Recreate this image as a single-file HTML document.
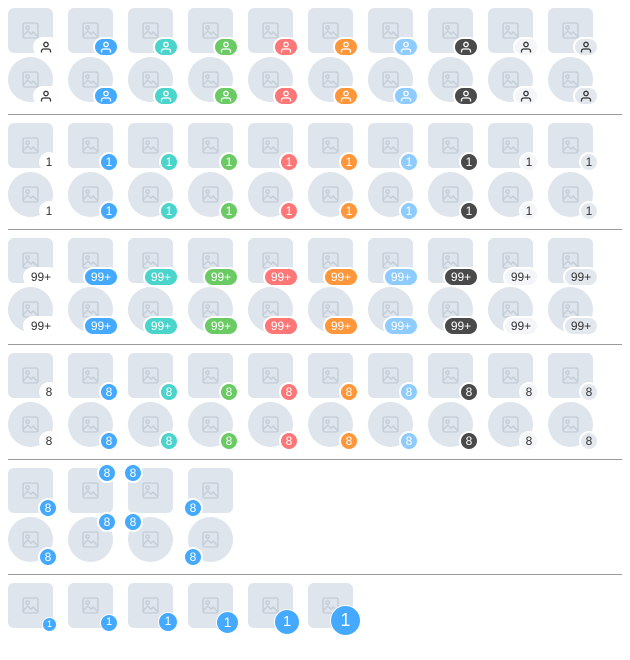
<!DOCTYPE html>
<html><head><meta charset="utf-8"><style>
*{margin:0;padding:0;box-sizing:border-box}
body{width:630px;height:660px;background:#fff;position:relative;overflow:hidden;font-family:"Liberation Sans",sans-serif}
.a{position:absolute;width:45px;height:45px;background:#dfe5ec;border-radius:6px}
.c{border-radius:50%}
.i{position:absolute;left:14px;top:14px;width:17px;height:17px;fill:none;stroke:#c5ced8;stroke-width:1.4}
.b{position:absolute;right:-6px;bottom:-4px;height:20px;min-width:20px;border:2px solid #fff;border-radius:10px;font-size:12px;line-height:16px;text-align:center;color:#fff;font-weight:500;padding:0 3px;white-space:nowrap}
.p{width:26px;padding:0}
.p svg{width:12px;height:12px;margin-top:2px;fill:none;stroke:currentColor;stroke-width:1.3}
.q{width:36px}
.k0{background:#fff;color:#333;box-shadow:0 0 1px rgba(0,0,0,.05)}.k1{background:#45aaff}.k2{background:#4ad4cc}.k3{background:#6acb64}.k4{background:#ff7676}.k5{background:#ff963a}.k6{background:#8ecbff}.k7{background:#4a4a4a}.k8{background:#f3f5f8;color:#333}.k9{background:#e3e8ee;color:#333}
.h{position:absolute;left:8px;width:614px;height:1px;background:#9a9a9a}
.d{position:absolute;border-radius:50%;background:#45aaff;color:#fff;text-align:center;border:1.5px solid #fff}
</style></head><body>
<div class="h" style="top:114px"></div><div class="h" style="top:229px"></div><div class="h" style="top:344px"></div><div class="h" style="top:459px"></div><div class="h" style="top:574px"></div>

<!-- section 1 -->
<div class="a" style="left:8px;top:8px"><svg class="i" viewBox="0 0 16 16"><rect x="1" y="1" width="14" height="14" rx="1.5"/><circle cx="5.3" cy="5.3" r="1.6"/><path d="M1 13l4.5-4.5 3 3 2-2 4.5 4.5"/></svg><div class="b p k0"><svg viewBox="0 0 12 12"><circle cx="6" cy="3.5" r="2.2"/><path d="M1.5 11.5v-1.5a2 2 0 0 1 2-2h5a2 2 0 0 1 2 2v1.5"/></svg></div></div>
<div class="a" style="left:68px;top:8px"><svg class="i" viewBox="0 0 16 16"><rect x="1" y="1" width="14" height="14" rx="1.5"/><circle cx="5.3" cy="5.3" r="1.6"/><path d="M1 13l4.5-4.5 3 3 2-2 4.5 4.5"/></svg><div class="b p k1"><svg viewBox="0 0 12 12"><circle cx="6" cy="3.5" r="2.2"/><path d="M1.5 11.5v-1.5a2 2 0 0 1 2-2h5a2 2 0 0 1 2 2v1.5"/></svg></div></div>
<div class="a" style="left:128px;top:8px"><svg class="i" viewBox="0 0 16 16"><rect x="1" y="1" width="14" height="14" rx="1.5"/><circle cx="5.3" cy="5.3" r="1.6"/><path d="M1 13l4.5-4.5 3 3 2-2 4.5 4.5"/></svg><div class="b p k2"><svg viewBox="0 0 12 12"><circle cx="6" cy="3.5" r="2.2"/><path d="M1.5 11.5v-1.5a2 2 0 0 1 2-2h5a2 2 0 0 1 2 2v1.5"/></svg></div></div>
<div class="a" style="left:188px;top:8px"><svg class="i" viewBox="0 0 16 16"><rect x="1" y="1" width="14" height="14" rx="1.5"/><circle cx="5.3" cy="5.3" r="1.6"/><path d="M1 13l4.5-4.5 3 3 2-2 4.5 4.5"/></svg><div class="b p k3"><svg viewBox="0 0 12 12"><circle cx="6" cy="3.5" r="2.2"/><path d="M1.5 11.5v-1.5a2 2 0 0 1 2-2h5a2 2 0 0 1 2 2v1.5"/></svg></div></div>
<div class="a" style="left:248px;top:8px"><svg class="i" viewBox="0 0 16 16"><rect x="1" y="1" width="14" height="14" rx="1.5"/><circle cx="5.3" cy="5.3" r="1.6"/><path d="M1 13l4.5-4.5 3 3 2-2 4.5 4.5"/></svg><div class="b p k4"><svg viewBox="0 0 12 12"><circle cx="6" cy="3.5" r="2.2"/><path d="M1.5 11.5v-1.5a2 2 0 0 1 2-2h5a2 2 0 0 1 2 2v1.5"/></svg></div></div>
<div class="a" style="left:308px;top:8px"><svg class="i" viewBox="0 0 16 16"><rect x="1" y="1" width="14" height="14" rx="1.5"/><circle cx="5.3" cy="5.3" r="1.6"/><path d="M1 13l4.5-4.5 3 3 2-2 4.5 4.5"/></svg><div class="b p k5"><svg viewBox="0 0 12 12"><circle cx="6" cy="3.5" r="2.2"/><path d="M1.5 11.5v-1.5a2 2 0 0 1 2-2h5a2 2 0 0 1 2 2v1.5"/></svg></div></div>
<div class="a" style="left:368px;top:8px"><svg class="i" viewBox="0 0 16 16"><rect x="1" y="1" width="14" height="14" rx="1.5"/><circle cx="5.3" cy="5.3" r="1.6"/><path d="M1 13l4.5-4.5 3 3 2-2 4.5 4.5"/></svg><div class="b p k6"><svg viewBox="0 0 12 12"><circle cx="6" cy="3.5" r="2.2"/><path d="M1.5 11.5v-1.5a2 2 0 0 1 2-2h5a2 2 0 0 1 2 2v1.5"/></svg></div></div>
<div class="a" style="left:428px;top:8px"><svg class="i" viewBox="0 0 16 16"><rect x="1" y="1" width="14" height="14" rx="1.5"/><circle cx="5.3" cy="5.3" r="1.6"/><path d="M1 13l4.5-4.5 3 3 2-2 4.5 4.5"/></svg><div class="b p k7"><svg viewBox="0 0 12 12"><circle cx="6" cy="3.5" r="2.2"/><path d="M1.5 11.5v-1.5a2 2 0 0 1 2-2h5a2 2 0 0 1 2 2v1.5"/></svg></div></div>
<div class="a" style="left:488px;top:8px"><svg class="i" viewBox="0 0 16 16"><rect x="1" y="1" width="14" height="14" rx="1.5"/><circle cx="5.3" cy="5.3" r="1.6"/><path d="M1 13l4.5-4.5 3 3 2-2 4.5 4.5"/></svg><div class="b p k8"><svg viewBox="0 0 12 12"><circle cx="6" cy="3.5" r="2.2"/><path d="M1.5 11.5v-1.5a2 2 0 0 1 2-2h5a2 2 0 0 1 2 2v1.5"/></svg></div></div>
<div class="a" style="left:548px;top:8px"><svg class="i" viewBox="0 0 16 16"><rect x="1" y="1" width="14" height="14" rx="1.5"/><circle cx="5.3" cy="5.3" r="1.6"/><path d="M1 13l4.5-4.5 3 3 2-2 4.5 4.5"/></svg><div class="b p k9"><svg viewBox="0 0 12 12"><circle cx="6" cy="3.5" r="2.2"/><path d="M1.5 11.5v-1.5a2 2 0 0 1 2-2h5a2 2 0 0 1 2 2v1.5"/></svg></div></div>
<div class="a c" style="left:8px;top:57px"><svg class="i" viewBox="0 0 16 16"><rect x="1" y="1" width="14" height="14" rx="1.5"/><circle cx="5.3" cy="5.3" r="1.6"/><path d="M1 13l4.5-4.5 3 3 2-2 4.5 4.5"/></svg><div class="b p k0"><svg viewBox="0 0 12 12"><circle cx="6" cy="3.5" r="2.2"/><path d="M1.5 11.5v-1.5a2 2 0 0 1 2-2h5a2 2 0 0 1 2 2v1.5"/></svg></div></div>
<div class="a c" style="left:68px;top:57px"><svg class="i" viewBox="0 0 16 16"><rect x="1" y="1" width="14" height="14" rx="1.5"/><circle cx="5.3" cy="5.3" r="1.6"/><path d="M1 13l4.5-4.5 3 3 2-2 4.5 4.5"/></svg><div class="b p k1"><svg viewBox="0 0 12 12"><circle cx="6" cy="3.5" r="2.2"/><path d="M1.5 11.5v-1.5a2 2 0 0 1 2-2h5a2 2 0 0 1 2 2v1.5"/></svg></div></div>
<div class="a c" style="left:128px;top:57px"><svg class="i" viewBox="0 0 16 16"><rect x="1" y="1" width="14" height="14" rx="1.5"/><circle cx="5.3" cy="5.3" r="1.6"/><path d="M1 13l4.5-4.5 3 3 2-2 4.5 4.5"/></svg><div class="b p k2"><svg viewBox="0 0 12 12"><circle cx="6" cy="3.5" r="2.2"/><path d="M1.5 11.5v-1.5a2 2 0 0 1 2-2h5a2 2 0 0 1 2 2v1.5"/></svg></div></div>
<div class="a c" style="left:188px;top:57px"><svg class="i" viewBox="0 0 16 16"><rect x="1" y="1" width="14" height="14" rx="1.5"/><circle cx="5.3" cy="5.3" r="1.6"/><path d="M1 13l4.5-4.5 3 3 2-2 4.5 4.5"/></svg><div class="b p k3"><svg viewBox="0 0 12 12"><circle cx="6" cy="3.5" r="2.2"/><path d="M1.5 11.5v-1.5a2 2 0 0 1 2-2h5a2 2 0 0 1 2 2v1.5"/></svg></div></div>
<div class="a c" style="left:248px;top:57px"><svg class="i" viewBox="0 0 16 16"><rect x="1" y="1" width="14" height="14" rx="1.5"/><circle cx="5.3" cy="5.3" r="1.6"/><path d="M1 13l4.5-4.5 3 3 2-2 4.5 4.5"/></svg><div class="b p k4"><svg viewBox="0 0 12 12"><circle cx="6" cy="3.5" r="2.2"/><path d="M1.5 11.5v-1.5a2 2 0 0 1 2-2h5a2 2 0 0 1 2 2v1.5"/></svg></div></div>
<div class="a c" style="left:308px;top:57px"><svg class="i" viewBox="0 0 16 16"><rect x="1" y="1" width="14" height="14" rx="1.5"/><circle cx="5.3" cy="5.3" r="1.6"/><path d="M1 13l4.5-4.5 3 3 2-2 4.5 4.5"/></svg><div class="b p k5"><svg viewBox="0 0 12 12"><circle cx="6" cy="3.5" r="2.2"/><path d="M1.5 11.5v-1.5a2 2 0 0 1 2-2h5a2 2 0 0 1 2 2v1.5"/></svg></div></div>
<div class="a c" style="left:368px;top:57px"><svg class="i" viewBox="0 0 16 16"><rect x="1" y="1" width="14" height="14" rx="1.5"/><circle cx="5.3" cy="5.3" r="1.6"/><path d="M1 13l4.5-4.5 3 3 2-2 4.5 4.5"/></svg><div class="b p k6"><svg viewBox="0 0 12 12"><circle cx="6" cy="3.5" r="2.2"/><path d="M1.5 11.5v-1.5a2 2 0 0 1 2-2h5a2 2 0 0 1 2 2v1.5"/></svg></div></div>
<div class="a c" style="left:428px;top:57px"><svg class="i" viewBox="0 0 16 16"><rect x="1" y="1" width="14" height="14" rx="1.5"/><circle cx="5.3" cy="5.3" r="1.6"/><path d="M1 13l4.5-4.5 3 3 2-2 4.5 4.5"/></svg><div class="b p k7"><svg viewBox="0 0 12 12"><circle cx="6" cy="3.5" r="2.2"/><path d="M1.5 11.5v-1.5a2 2 0 0 1 2-2h5a2 2 0 0 1 2 2v1.5"/></svg></div></div>
<div class="a c" style="left:488px;top:57px"><svg class="i" viewBox="0 0 16 16"><rect x="1" y="1" width="14" height="14" rx="1.5"/><circle cx="5.3" cy="5.3" r="1.6"/><path d="M1 13l4.5-4.5 3 3 2-2 4.5 4.5"/></svg><div class="b p k8"><svg viewBox="0 0 12 12"><circle cx="6" cy="3.5" r="2.2"/><path d="M1.5 11.5v-1.5a2 2 0 0 1 2-2h5a2 2 0 0 1 2 2v1.5"/></svg></div></div>
<div class="a c" style="left:548px;top:57px"><svg class="i" viewBox="0 0 16 16"><rect x="1" y="1" width="14" height="14" rx="1.5"/><circle cx="5.3" cy="5.3" r="1.6"/><path d="M1 13l4.5-4.5 3 3 2-2 4.5 4.5"/></svg><div class="b p k9"><svg viewBox="0 0 12 12"><circle cx="6" cy="3.5" r="2.2"/><path d="M1.5 11.5v-1.5a2 2 0 0 1 2-2h5a2 2 0 0 1 2 2v1.5"/></svg></div></div>

<!-- section 2 -->
<div class="a" style="left:8px;top:123px"><svg class="i" viewBox="0 0 16 16"><rect x="1" y="1" width="14" height="14" rx="1.5"/><circle cx="5.3" cy="5.3" r="1.6"/><path d="M1 13l4.5-4.5 3 3 2-2 4.5 4.5"/></svg><div class="b k0">1</div></div>
<div class="a" style="left:68px;top:123px"><svg class="i" viewBox="0 0 16 16"><rect x="1" y="1" width="14" height="14" rx="1.5"/><circle cx="5.3" cy="5.3" r="1.6"/><path d="M1 13l4.5-4.5 3 3 2-2 4.5 4.5"/></svg><div class="b k1">1</div></div>
<div class="a" style="left:128px;top:123px"><svg class="i" viewBox="0 0 16 16"><rect x="1" y="1" width="14" height="14" rx="1.5"/><circle cx="5.3" cy="5.3" r="1.6"/><path d="M1 13l4.5-4.5 3 3 2-2 4.5 4.5"/></svg><div class="b k2">1</div></div>
<div class="a" style="left:188px;top:123px"><svg class="i" viewBox="0 0 16 16"><rect x="1" y="1" width="14" height="14" rx="1.5"/><circle cx="5.3" cy="5.3" r="1.6"/><path d="M1 13l4.5-4.5 3 3 2-2 4.5 4.5"/></svg><div class="b k3">1</div></div>
<div class="a" style="left:248px;top:123px"><svg class="i" viewBox="0 0 16 16"><rect x="1" y="1" width="14" height="14" rx="1.5"/><circle cx="5.3" cy="5.3" r="1.6"/><path d="M1 13l4.5-4.5 3 3 2-2 4.5 4.5"/></svg><div class="b k4">1</div></div>
<div class="a" style="left:308px;top:123px"><svg class="i" viewBox="0 0 16 16"><rect x="1" y="1" width="14" height="14" rx="1.5"/><circle cx="5.3" cy="5.3" r="1.6"/><path d="M1 13l4.5-4.5 3 3 2-2 4.5 4.5"/></svg><div class="b k5">1</div></div>
<div class="a" style="left:368px;top:123px"><svg class="i" viewBox="0 0 16 16"><rect x="1" y="1" width="14" height="14" rx="1.5"/><circle cx="5.3" cy="5.3" r="1.6"/><path d="M1 13l4.5-4.5 3 3 2-2 4.5 4.5"/></svg><div class="b k6">1</div></div>
<div class="a" style="left:428px;top:123px"><svg class="i" viewBox="0 0 16 16"><rect x="1" y="1" width="14" height="14" rx="1.5"/><circle cx="5.3" cy="5.3" r="1.6"/><path d="M1 13l4.5-4.5 3 3 2-2 4.5 4.5"/></svg><div class="b k7">1</div></div>
<div class="a" style="left:488px;top:123px"><svg class="i" viewBox="0 0 16 16"><rect x="1" y="1" width="14" height="14" rx="1.5"/><circle cx="5.3" cy="5.3" r="1.6"/><path d="M1 13l4.5-4.5 3 3 2-2 4.5 4.5"/></svg><div class="b k8">1</div></div>
<div class="a" style="left:548px;top:123px"><svg class="i" viewBox="0 0 16 16"><rect x="1" y="1" width="14" height="14" rx="1.5"/><circle cx="5.3" cy="5.3" r="1.6"/><path d="M1 13l4.5-4.5 3 3 2-2 4.5 4.5"/></svg><div class="b k9">1</div></div>
<div class="a c" style="left:8px;top:172px"><svg class="i" viewBox="0 0 16 16"><rect x="1" y="1" width="14" height="14" rx="1.5"/><circle cx="5.3" cy="5.3" r="1.6"/><path d="M1 13l4.5-4.5 3 3 2-2 4.5 4.5"/></svg><div class="b k0">1</div></div>
<div class="a c" style="left:68px;top:172px"><svg class="i" viewBox="0 0 16 16"><rect x="1" y="1" width="14" height="14" rx="1.5"/><circle cx="5.3" cy="5.3" r="1.6"/><path d="M1 13l4.5-4.5 3 3 2-2 4.5 4.5"/></svg><div class="b k1">1</div></div>
<div class="a c" style="left:128px;top:172px"><svg class="i" viewBox="0 0 16 16"><rect x="1" y="1" width="14" height="14" rx="1.5"/><circle cx="5.3" cy="5.3" r="1.6"/><path d="M1 13l4.5-4.5 3 3 2-2 4.5 4.5"/></svg><div class="b k2">1</div></div>
<div class="a c" style="left:188px;top:172px"><svg class="i" viewBox="0 0 16 16"><rect x="1" y="1" width="14" height="14" rx="1.5"/><circle cx="5.3" cy="5.3" r="1.6"/><path d="M1 13l4.5-4.5 3 3 2-2 4.5 4.5"/></svg><div class="b k3">1</div></div>
<div class="a c" style="left:248px;top:172px"><svg class="i" viewBox="0 0 16 16"><rect x="1" y="1" width="14" height="14" rx="1.5"/><circle cx="5.3" cy="5.3" r="1.6"/><path d="M1 13l4.5-4.5 3 3 2-2 4.5 4.5"/></svg><div class="b k4">1</div></div>
<div class="a c" style="left:308px;top:172px"><svg class="i" viewBox="0 0 16 16"><rect x="1" y="1" width="14" height="14" rx="1.5"/><circle cx="5.3" cy="5.3" r="1.6"/><path d="M1 13l4.5-4.5 3 3 2-2 4.5 4.5"/></svg><div class="b k5">1</div></div>
<div class="a c" style="left:368px;top:172px"><svg class="i" viewBox="0 0 16 16"><rect x="1" y="1" width="14" height="14" rx="1.5"/><circle cx="5.3" cy="5.3" r="1.6"/><path d="M1 13l4.5-4.5 3 3 2-2 4.5 4.5"/></svg><div class="b k6">1</div></div>
<div class="a c" style="left:428px;top:172px"><svg class="i" viewBox="0 0 16 16"><rect x="1" y="1" width="14" height="14" rx="1.5"/><circle cx="5.3" cy="5.3" r="1.6"/><path d="M1 13l4.5-4.5 3 3 2-2 4.5 4.5"/></svg><div class="b k7">1</div></div>
<div class="a c" style="left:488px;top:172px"><svg class="i" viewBox="0 0 16 16"><rect x="1" y="1" width="14" height="14" rx="1.5"/><circle cx="5.3" cy="5.3" r="1.6"/><path d="M1 13l4.5-4.5 3 3 2-2 4.5 4.5"/></svg><div class="b k8">1</div></div>
<div class="a c" style="left:548px;top:172px"><svg class="i" viewBox="0 0 16 16"><rect x="1" y="1" width="14" height="14" rx="1.5"/><circle cx="5.3" cy="5.3" r="1.6"/><path d="M1 13l4.5-4.5 3 3 2-2 4.5 4.5"/></svg><div class="b k9">1</div></div>

<!-- section 3 -->
<div class="a" style="left:8px;top:238px"><svg class="i" viewBox="0 0 16 16"><rect x="1" y="1" width="14" height="14" rx="1.5"/><circle cx="5.3" cy="5.3" r="1.6"/><path d="M1 13l4.5-4.5 3 3 2-2 4.5 4.5"/></svg><div class="b q k0">99+</div></div>
<div class="a" style="left:68px;top:238px"><svg class="i" viewBox="0 0 16 16"><rect x="1" y="1" width="14" height="14" rx="1.5"/><circle cx="5.3" cy="5.3" r="1.6"/><path d="M1 13l4.5-4.5 3 3 2-2 4.5 4.5"/></svg><div class="b q k1">99+</div></div>
<div class="a" style="left:128px;top:238px"><svg class="i" viewBox="0 0 16 16"><rect x="1" y="1" width="14" height="14" rx="1.5"/><circle cx="5.3" cy="5.3" r="1.6"/><path d="M1 13l4.5-4.5 3 3 2-2 4.5 4.5"/></svg><div class="b q k2">99+</div></div>
<div class="a" style="left:188px;top:238px"><svg class="i" viewBox="0 0 16 16"><rect x="1" y="1" width="14" height="14" rx="1.5"/><circle cx="5.3" cy="5.3" r="1.6"/><path d="M1 13l4.5-4.5 3 3 2-2 4.5 4.5"/></svg><div class="b q k3">99+</div></div>
<div class="a" style="left:248px;top:238px"><svg class="i" viewBox="0 0 16 16"><rect x="1" y="1" width="14" height="14" rx="1.5"/><circle cx="5.3" cy="5.3" r="1.6"/><path d="M1 13l4.5-4.5 3 3 2-2 4.5 4.5"/></svg><div class="b q k4">99+</div></div>
<div class="a" style="left:308px;top:238px"><svg class="i" viewBox="0 0 16 16"><rect x="1" y="1" width="14" height="14" rx="1.5"/><circle cx="5.3" cy="5.3" r="1.6"/><path d="M1 13l4.5-4.5 3 3 2-2 4.5 4.5"/></svg><div class="b q k5">99+</div></div>
<div class="a" style="left:368px;top:238px"><svg class="i" viewBox="0 0 16 16"><rect x="1" y="1" width="14" height="14" rx="1.5"/><circle cx="5.3" cy="5.3" r="1.6"/><path d="M1 13l4.5-4.5 3 3 2-2 4.5 4.5"/></svg><div class="b q k6">99+</div></div>
<div class="a" style="left:428px;top:238px"><svg class="i" viewBox="0 0 16 16"><rect x="1" y="1" width="14" height="14" rx="1.5"/><circle cx="5.3" cy="5.3" r="1.6"/><path d="M1 13l4.5-4.5 3 3 2-2 4.5 4.5"/></svg><div class="b q k7">99+</div></div>
<div class="a" style="left:488px;top:238px"><svg class="i" viewBox="0 0 16 16"><rect x="1" y="1" width="14" height="14" rx="1.5"/><circle cx="5.3" cy="5.3" r="1.6"/><path d="M1 13l4.5-4.5 3 3 2-2 4.5 4.5"/></svg><div class="b q k8">99+</div></div>
<div class="a" style="left:548px;top:238px"><svg class="i" viewBox="0 0 16 16"><rect x="1" y="1" width="14" height="14" rx="1.5"/><circle cx="5.3" cy="5.3" r="1.6"/><path d="M1 13l4.5-4.5 3 3 2-2 4.5 4.5"/></svg><div class="b q k9">99+</div></div>
<div class="a c" style="left:8px;top:287px"><svg class="i" viewBox="0 0 16 16"><rect x="1" y="1" width="14" height="14" rx="1.5"/><circle cx="5.3" cy="5.3" r="1.6"/><path d="M1 13l4.5-4.5 3 3 2-2 4.5 4.5"/></svg><div class="b q k0">99+</div></div>
<div class="a c" style="left:68px;top:287px"><svg class="i" viewBox="0 0 16 16"><rect x="1" y="1" width="14" height="14" rx="1.5"/><circle cx="5.3" cy="5.3" r="1.6"/><path d="M1 13l4.5-4.5 3 3 2-2 4.5 4.5"/></svg><div class="b q k1">99+</div></div>
<div class="a c" style="left:128px;top:287px"><svg class="i" viewBox="0 0 16 16"><rect x="1" y="1" width="14" height="14" rx="1.5"/><circle cx="5.3" cy="5.3" r="1.6"/><path d="M1 13l4.5-4.5 3 3 2-2 4.5 4.5"/></svg><div class="b q k2">99+</div></div>
<div class="a c" style="left:188px;top:287px"><svg class="i" viewBox="0 0 16 16"><rect x="1" y="1" width="14" height="14" rx="1.5"/><circle cx="5.3" cy="5.3" r="1.6"/><path d="M1 13l4.5-4.5 3 3 2-2 4.5 4.5"/></svg><div class="b q k3">99+</div></div>
<div class="a c" style="left:248px;top:287px"><svg class="i" viewBox="0 0 16 16"><rect x="1" y="1" width="14" height="14" rx="1.5"/><circle cx="5.3" cy="5.3" r="1.6"/><path d="M1 13l4.5-4.5 3 3 2-2 4.5 4.5"/></svg><div class="b q k4">99+</div></div>
<div class="a c" style="left:308px;top:287px"><svg class="i" viewBox="0 0 16 16"><rect x="1" y="1" width="14" height="14" rx="1.5"/><circle cx="5.3" cy="5.3" r="1.6"/><path d="M1 13l4.5-4.5 3 3 2-2 4.5 4.5"/></svg><div class="b q k5">99+</div></div>
<div class="a c" style="left:368px;top:287px"><svg class="i" viewBox="0 0 16 16"><rect x="1" y="1" width="14" height="14" rx="1.5"/><circle cx="5.3" cy="5.3" r="1.6"/><path d="M1 13l4.5-4.5 3 3 2-2 4.5 4.5"/></svg><div class="b q k6">99+</div></div>
<div class="a c" style="left:428px;top:287px"><svg class="i" viewBox="0 0 16 16"><rect x="1" y="1" width="14" height="14" rx="1.5"/><circle cx="5.3" cy="5.3" r="1.6"/><path d="M1 13l4.5-4.5 3 3 2-2 4.5 4.5"/></svg><div class="b q k7">99+</div></div>
<div class="a c" style="left:488px;top:287px"><svg class="i" viewBox="0 0 16 16"><rect x="1" y="1" width="14" height="14" rx="1.5"/><circle cx="5.3" cy="5.3" r="1.6"/><path d="M1 13l4.5-4.5 3 3 2-2 4.5 4.5"/></svg><div class="b q k8">99+</div></div>
<div class="a c" style="left:548px;top:287px"><svg class="i" viewBox="0 0 16 16"><rect x="1" y="1" width="14" height="14" rx="1.5"/><circle cx="5.3" cy="5.3" r="1.6"/><path d="M1 13l4.5-4.5 3 3 2-2 4.5 4.5"/></svg><div class="b q k9">99+</div></div>

<!-- section 4 -->
<div class="a" style="left:8px;top:353px"><svg class="i" viewBox="0 0 16 16"><rect x="1" y="1" width="14" height="14" rx="1.5"/><circle cx="5.3" cy="5.3" r="1.6"/><path d="M1 13l4.5-4.5 3 3 2-2 4.5 4.5"/></svg><div class="b k0">8</div></div>
<div class="a" style="left:68px;top:353px"><svg class="i" viewBox="0 0 16 16"><rect x="1" y="1" width="14" height="14" rx="1.5"/><circle cx="5.3" cy="5.3" r="1.6"/><path d="M1 13l4.5-4.5 3 3 2-2 4.5 4.5"/></svg><div class="b k1">8</div></div>
<div class="a" style="left:128px;top:353px"><svg class="i" viewBox="0 0 16 16"><rect x="1" y="1" width="14" height="14" rx="1.5"/><circle cx="5.3" cy="5.3" r="1.6"/><path d="M1 13l4.5-4.5 3 3 2-2 4.5 4.5"/></svg><div class="b k2">8</div></div>
<div class="a" style="left:188px;top:353px"><svg class="i" viewBox="0 0 16 16"><rect x="1" y="1" width="14" height="14" rx="1.5"/><circle cx="5.3" cy="5.3" r="1.6"/><path d="M1 13l4.5-4.5 3 3 2-2 4.5 4.5"/></svg><div class="b k3">8</div></div>
<div class="a" style="left:248px;top:353px"><svg class="i" viewBox="0 0 16 16"><rect x="1" y="1" width="14" height="14" rx="1.5"/><circle cx="5.3" cy="5.3" r="1.6"/><path d="M1 13l4.5-4.5 3 3 2-2 4.5 4.5"/></svg><div class="b k4">8</div></div>
<div class="a" style="left:308px;top:353px"><svg class="i" viewBox="0 0 16 16"><rect x="1" y="1" width="14" height="14" rx="1.5"/><circle cx="5.3" cy="5.3" r="1.6"/><path d="M1 13l4.5-4.5 3 3 2-2 4.5 4.5"/></svg><div class="b k5">8</div></div>
<div class="a" style="left:368px;top:353px"><svg class="i" viewBox="0 0 16 16"><rect x="1" y="1" width="14" height="14" rx="1.5"/><circle cx="5.3" cy="5.3" r="1.6"/><path d="M1 13l4.5-4.5 3 3 2-2 4.5 4.5"/></svg><div class="b k6">8</div></div>
<div class="a" style="left:428px;top:353px"><svg class="i" viewBox="0 0 16 16"><rect x="1" y="1" width="14" height="14" rx="1.5"/><circle cx="5.3" cy="5.3" r="1.6"/><path d="M1 13l4.5-4.5 3 3 2-2 4.5 4.5"/></svg><div class="b k7">8</div></div>
<div class="a" style="left:488px;top:353px"><svg class="i" viewBox="0 0 16 16"><rect x="1" y="1" width="14" height="14" rx="1.5"/><circle cx="5.3" cy="5.3" r="1.6"/><path d="M1 13l4.5-4.5 3 3 2-2 4.5 4.5"/></svg><div class="b k8">8</div></div>
<div class="a" style="left:548px;top:353px"><svg class="i" viewBox="0 0 16 16"><rect x="1" y="1" width="14" height="14" rx="1.5"/><circle cx="5.3" cy="5.3" r="1.6"/><path d="M1 13l4.5-4.5 3 3 2-2 4.5 4.5"/></svg><div class="b k9">8</div></div>
<div class="a c" style="left:8px;top:402px"><svg class="i" viewBox="0 0 16 16"><rect x="1" y="1" width="14" height="14" rx="1.5"/><circle cx="5.3" cy="5.3" r="1.6"/><path d="M1 13l4.5-4.5 3 3 2-2 4.5 4.5"/></svg><div class="b k0">8</div></div>
<div class="a c" style="left:68px;top:402px"><svg class="i" viewBox="0 0 16 16"><rect x="1" y="1" width="14" height="14" rx="1.5"/><circle cx="5.3" cy="5.3" r="1.6"/><path d="M1 13l4.5-4.5 3 3 2-2 4.5 4.5"/></svg><div class="b k1">8</div></div>
<div class="a c" style="left:128px;top:402px"><svg class="i" viewBox="0 0 16 16"><rect x="1" y="1" width="14" height="14" rx="1.5"/><circle cx="5.3" cy="5.3" r="1.6"/><path d="M1 13l4.5-4.5 3 3 2-2 4.5 4.5"/></svg><div class="b k2">8</div></div>
<div class="a c" style="left:188px;top:402px"><svg class="i" viewBox="0 0 16 16"><rect x="1" y="1" width="14" height="14" rx="1.5"/><circle cx="5.3" cy="5.3" r="1.6"/><path d="M1 13l4.5-4.5 3 3 2-2 4.5 4.5"/></svg><div class="b k3">8</div></div>
<div class="a c" style="left:248px;top:402px"><svg class="i" viewBox="0 0 16 16"><rect x="1" y="1" width="14" height="14" rx="1.5"/><circle cx="5.3" cy="5.3" r="1.6"/><path d="M1 13l4.5-4.5 3 3 2-2 4.5 4.5"/></svg><div class="b k4">8</div></div>
<div class="a c" style="left:308px;top:402px"><svg class="i" viewBox="0 0 16 16"><rect x="1" y="1" width="14" height="14" rx="1.5"/><circle cx="5.3" cy="5.3" r="1.6"/><path d="M1 13l4.5-4.5 3 3 2-2 4.5 4.5"/></svg><div class="b k5">8</div></div>
<div class="a c" style="left:368px;top:402px"><svg class="i" viewBox="0 0 16 16"><rect x="1" y="1" width="14" height="14" rx="1.5"/><circle cx="5.3" cy="5.3" r="1.6"/><path d="M1 13l4.5-4.5 3 3 2-2 4.5 4.5"/></svg><div class="b k6">8</div></div>
<div class="a c" style="left:428px;top:402px"><svg class="i" viewBox="0 0 16 16"><rect x="1" y="1" width="14" height="14" rx="1.5"/><circle cx="5.3" cy="5.3" r="1.6"/><path d="M1 13l4.5-4.5 3 3 2-2 4.5 4.5"/></svg><div class="b k7">8</div></div>
<div class="a c" style="left:488px;top:402px"><svg class="i" viewBox="0 0 16 16"><rect x="1" y="1" width="14" height="14" rx="1.5"/><circle cx="5.3" cy="5.3" r="1.6"/><path d="M1 13l4.5-4.5 3 3 2-2 4.5 4.5"/></svg><div class="b k8">8</div></div>
<div class="a c" style="left:548px;top:402px"><svg class="i" viewBox="0 0 16 16"><rect x="1" y="1" width="14" height="14" rx="1.5"/><circle cx="5.3" cy="5.3" r="1.6"/><path d="M1 13l4.5-4.5 3 3 2-2 4.5 4.5"/></svg><div class="b k9">8</div></div>

<!-- section 5 -->
<div class="a" style="left:8px;top:468px"><svg class="i" viewBox="0 0 16 16"><rect x="1" y="1" width="14" height="14" rx="1.5"/><circle cx="5.3" cy="5.3" r="1.6"/><path d="M1 13l4.5-4.5 3 3 2-2 4.5 4.5"/></svg><div class="b k1" style="right:-5px;bottom:-5px">8</div></div>
<div class="a" style="left:68px;top:468px"><svg class="i" viewBox="0 0 16 16"><rect x="1" y="1" width="14" height="14" rx="1.5"/><circle cx="5.3" cy="5.3" r="1.6"/><path d="M1 13l4.5-4.5 3 3 2-2 4.5 4.5"/></svg></div>
<div class="a" style="left:128px;top:468px"><svg class="i" viewBox="0 0 16 16"><rect x="1" y="1" width="14" height="14" rx="1.5"/><circle cx="5.3" cy="5.3" r="1.6"/><path d="M1 13l4.5-4.5 3 3 2-2 4.5 4.5"/></svg></div>
<div class="a" style="left:188px;top:468px"><svg class="i" viewBox="0 0 16 16"><rect x="1" y="1" width="14" height="14" rx="1.5"/><circle cx="5.3" cy="5.3" r="1.6"/><path d="M1 13l4.5-4.5 3 3 2-2 4.5 4.5"/></svg><div class="b k1" style="right:auto;left:-5px;bottom:-5px">8</div></div>
<div class="a c" style="left:8px;top:517px"><svg class="i" viewBox="0 0 16 16"><rect x="1" y="1" width="14" height="14" rx="1.5"/><circle cx="5.3" cy="5.3" r="1.6"/><path d="M1 13l4.5-4.5 3 3 2-2 4.5 4.5"/></svg><div class="b k1" style="right:-5px;bottom:-5px">8</div></div>
<div class="a c" style="left:68px;top:517px"><svg class="i" viewBox="0 0 16 16"><rect x="1" y="1" width="14" height="14" rx="1.5"/><circle cx="5.3" cy="5.3" r="1.6"/><path d="M1 13l4.5-4.5 3 3 2-2 4.5 4.5"/></svg></div>
<div class="a c" style="left:128px;top:517px"><svg class="i" viewBox="0 0 16 16"><rect x="1" y="1" width="14" height="14" rx="1.5"/><circle cx="5.3" cy="5.3" r="1.6"/><path d="M1 13l4.5-4.5 3 3 2-2 4.5 4.5"/></svg></div>
<div class="a c" style="left:188px;top:517px"><svg class="i" viewBox="0 0 16 16"><rect x="1" y="1" width="14" height="14" rx="1.5"/><circle cx="5.3" cy="5.3" r="1.6"/><path d="M1 13l4.5-4.5 3 3 2-2 4.5 4.5"/></svg><div class="b k1" style="right:auto;left:-5px;bottom:-5px">8</div></div>
<div class="b k1" style="right:auto;bottom:auto;left:97px;top:463px">8</div>
<div class="b k1" style="right:auto;bottom:auto;left:123px;top:463px">8</div>
<div class="b k1" style="right:auto;bottom:auto;left:97px;top:512px">8</div>
<div class="b k1" style="right:auto;bottom:auto;left:123px;top:512px">8</div>

<!-- section 6 -->
<div class="a" style="left:8px;top:583px"><svg class="i" viewBox="0 0 16 16"><rect x="1" y="1" width="14" height="14" rx="1.5"/><circle cx="5.3" cy="5.3" r="1.6"/><path d="M1 13l4.5-4.5 3 3 2-2 4.5 4.5"/></svg></div>
<div class="a" style="left:68px;top:583px"><svg class="i" viewBox="0 0 16 16"><rect x="1" y="1" width="14" height="14" rx="1.5"/><circle cx="5.3" cy="5.3" r="1.6"/><path d="M1 13l4.5-4.5 3 3 2-2 4.5 4.5"/></svg></div>
<div class="a" style="left:128px;top:583px"><svg class="i" viewBox="0 0 16 16"><rect x="1" y="1" width="14" height="14" rx="1.5"/><circle cx="5.3" cy="5.3" r="1.6"/><path d="M1 13l4.5-4.5 3 3 2-2 4.5 4.5"/></svg></div>
<div class="a" style="left:188px;top:583px"><svg class="i" viewBox="0 0 16 16"><rect x="1" y="1" width="14" height="14" rx="1.5"/><circle cx="5.3" cy="5.3" r="1.6"/><path d="M1 13l4.5-4.5 3 3 2-2 4.5 4.5"/></svg></div>
<div class="a" style="left:248px;top:583px"><svg class="i" viewBox="0 0 16 16"><rect x="1" y="1" width="14" height="14" rx="1.5"/><circle cx="5.3" cy="5.3" r="1.6"/><path d="M1 13l4.5-4.5 3 3 2-2 4.5 4.5"/></svg></div>
<div class="a" style="left:308px;top:583px"><svg class="i" viewBox="0 0 16 16"><rect x="1" y="1" width="14" height="14" rx="1.5"/><circle cx="5.3" cy="5.3" r="1.6"/><path d="M1 13l4.5-4.5 3 3 2-2 4.5 4.5"/></svg></div>
<div class="d" style="left:42px;top:617px;width:15px;height:15px;font-size:9px;line-height:12px">1</div>
<div class="d" style="left:100px;top:614px;width:18px;height:18px;font-size:11px;line-height:15px">1</div>
<div class="d" style="left:158px;top:612px;width:20px;height:20px;font-size:12px;line-height:17px">1</div>
<div class="d" style="left:216px;top:611px;width:23px;height:23px;font-size:14px;line-height:20px">1</div>
<div class="d" style="left:274px;top:609px;width:26px;height:26px;font-size:15px;line-height:23px">1</div>
<div class="d" style="left:330px;top:605px;width:31px;height:31px;font-size:18px;line-height:28px">1</div>
</body></html>
